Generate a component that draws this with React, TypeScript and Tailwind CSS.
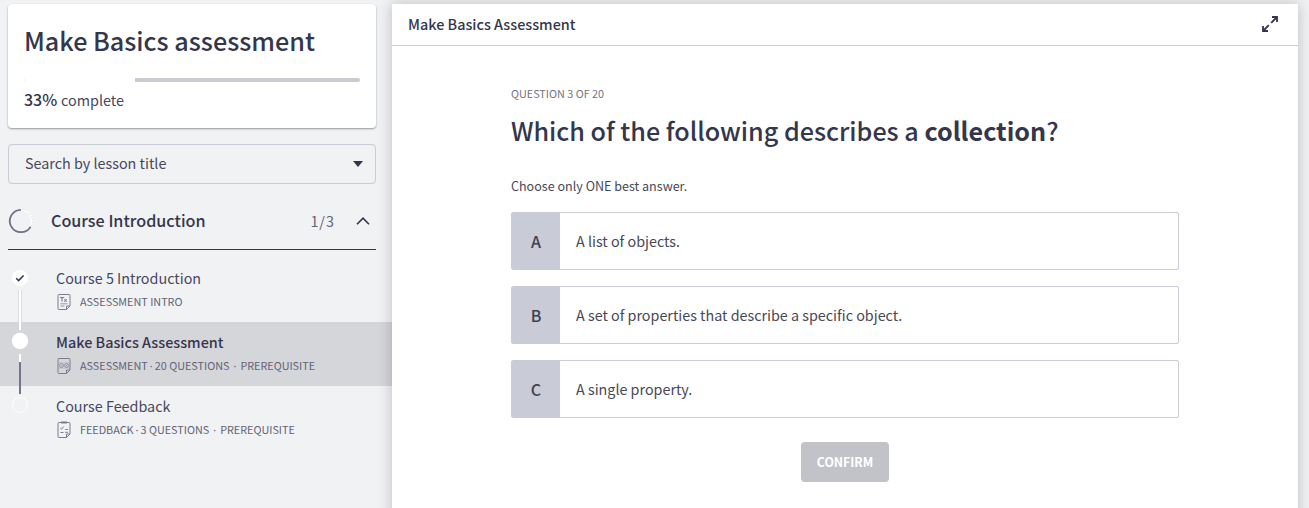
import type { ReactNode } from "react";

function ProgressRing() {
  return (
    <svg width="26" height="26" viewBox="0 0 26 26" fill="none" className="shrink-0">
      <path d="M22.7 18.6A11.2 11.2 0 1 1 13 1.8" stroke="#6f6f86" strokeWidth="1.8" />
      <path d="M13 1.8A11.2 11.2 0 0 1 22.7 18.6" stroke="#ffffff" strokeWidth="2" />
      <path d="M14 1.2A11.9 11.9 0 0 1 23.4 18.2" stroke="#c9cad0" strokeWidth="0.7" strokeDasharray="1.5 1.5" />
    </svg>
  );
}

function Sheet({ children, clip = false }: { children: ReactNode; clip?: boolean }) {
  return (
    <svg width="16" height="18" viewBox="0 0 16 18" fill="none" stroke="#7c7c90" strokeWidth="1" className="mt-px shrink-0">
      <path d="M3 1.5h10a1 1 0 0 1 1 1v10.5l-3.5 3.5H3a1 1 0 0 1-1-1v-13a1 1 0 0 1 1-1z" />
      <path d="M10.5 16.3v-3.3h3.3" />
      {clip && <path d="M5 1.5h6" strokeWidth="2" />}
      {children}
    </svg>
  );
}

function IntroIcon() {
  return (
    <Sheet>
      <path d="M4 4.5h4.2M6 4.5v4M8.3 6.3l2.4 2.4M10.7 6.3L8.3 8.7" strokeWidth="1.1" />
      <path d="M4.5 10.8h7M4.5 13h4" strokeWidth="0.8" />
    </Sheet>
  );
}

function AssessmentIcon() {
  return (
    <Sheet>
      <path d="M2 5.8h12M2 11.2h12" strokeWidth="0.2" />
      <circle cx="5.4" cy="8.5" r="2" strokeWidth="0.8" />
      <circle cx="10.6" cy="8.5" r="2" strokeWidth="0.8" />
      <path d="M4.7 8.5l.7.7 1-1.3M9.9 7.8l1.4 1.4M11.3 7.8L9.9 9.2" strokeWidth="0.5" />
    </Sheet>
  );
}

function FeedbackIcon() {
  return (
    <Sheet clip>
      <path d="M4.3 7l1.2 1.2 2.2-2.7M4.5 11.5h3" strokeWidth="1" />
      <path d="M9 8.5h3M9 11.3h3" strokeWidth="0.9" />
    </Sheet>
  );
}

function Lesson({ title, meta, icon, active = false, prerequisite = false, marker }: {
  title: string; meta: ReactNode; icon: ReactNode; active?: boolean; prerequisite?: boolean; marker: ReactNode;
}) {
  return (
    <li className={active ? "flex h-16 bg-[#d5d6da]" : "flex h-16"}>
      <div className="flex w-14 shrink-0 flex-col pl-2">{marker}</div>
      <div className="min-w-0 flex-1 pt-2">
        <div className={active
          ? "h-[23px] text-[14.4px] leading-6 font-medium text-[#35354d]"
          : "h-[23px] text-[14.35px] leading-6 text-[#47475c]"}>{title}</div>
        <div className="flex h-6 items-center gap-2 text-[10.8px] leading-4 whitespace-pre text-[#626276]">
          {icon}
          <span>
            {meta}
            {prerequisite && <><Dot wide />PREREQUISITE</>}
          </span>
        </div>
      </div>
    </li>
  );
}

function Dot({ wide = false }: { wide?: boolean }) {
  return (
    <span className={wide ? "inline-block w-[11px] text-center font-['Noto_Sans']" : "inline-block w-[7px] text-center font-['Noto_Sans']"}>·</span>
  );
}

function Answer({ letter, text }: { letter: string; text: string }) {
  return (
    <button className="flex h-[58px] w-full overflow-hidden rounded-xs border border-[#c9cbd6] bg-white text-left">
      <span className="flex h-full w-12 shrink-0 items-center justify-center bg-[#c9cbd6] text-[16px] font-medium text-[#3f4050]">{letter}</span>
      <span className="flex h-full items-center pl-4 text-[14.34px] text-[#474855]">{text}</span>
    </button>
  );
}

export default function App() {
  return (
    <div className="flex h-[508px] w-[1309px] overflow-hidden bg-[#f1f2f4] font-['Noto_Sans_CJK_SC',sans-serif] text-[#34364c]">
      <aside className="w-[392px] shrink-0 pt-1">
        <div className="mx-2 h-[124px] w-[368px] rounded-[4px] bg-white px-4 shadow-[0_1px_2px_rgba(0,0,0,0.38)]">
          <h1 className="pt-4 text-[25.15px] leading-10 font-medium">Make Basics assessment</h1>
          <div className="mt-[18px] flex h-1 w-[336px] justify-between">
            <div className="h-1 w-px rounded-l-full bg-[#f4f4f6]" />
            <div className="h-1 w-[225px] rounded-r-full bg-[#c9cbd6]" />
          </div>
          <p className="mt-[5px] flex items-baseline text-[14.4px] leading-6 text-[#47475c]">
            <span className="w-[37px] text-[16px] font-medium text-[#35354d]">33%</span>complete
          </p>
        </div>
        <button className="mx-2 mt-4 flex h-10 w-[368px] items-center justify-between rounded-[4px] border border-[#c9cbd6] pr-3 pl-4 text-[14.35px] text-[#47475c]">
          <span className="pb-0.5">Search by lesson title</span>
          <svg width="10" height="6" viewBox="0 0 10 6"><path d="M0 0h10L5 6z" fill="#34344c" /></svg>
        </button>
        <div className="mx-2 mt-2 flex h-[58px] w-[368px] items-center border-b border-[#34344c]">
          <ProgressRing />
          <h2 className="ml-[17px] flex-1 pb-0.5 text-[16.15px] leading-6 font-medium">Course Introduction</h2>
          <span className="text-[14.4px] leading-6 tracking-[1px] text-[#626276]">1/3</span>
          <svg width="14" height="8" viewBox="0 0 14 8" fill="none" className="mr-[6px] ml-[21px]">
            <path d="M1 7.2L7 1.2l6 6" stroke="#34344c" strokeWidth="1.6" />
          </svg>
        </div>
        <ul className="mt-2">
          <Lesson
            title="Course 5 Introduction"
            meta="ASSESSMENT INTRO"
            icon={<IntroIcon />}
            marker={
              <svg width="24" height="64" viewBox="0 0 24 64" fill="none">
                <circle cx="12" cy="20" r="8" fill="#fff" />
                <path d="M8.2 20.2l2.4 2.4 5-5.2" stroke="#34344c" strokeWidth="1.5" />
                <path d="M10.7 32v32M13.3 32v32" stroke="#d5d6da" strokeWidth="0.9" />
                <path d="M12 32v32" stroke="#fff" strokeWidth="1.8" />
              </svg>
            }
          />
          <Lesson
            active
            prerequisite
            title="Make Basics Assessment"
            meta={<>ASSESSMENT<Dot />20 QUESTIONS</>}
            icon={<AssessmentIcon />}
            marker={
              <svg width="24" height="64" viewBox="0 0 24 64" fill="none">
                <path d="M12 0v8" stroke="#fff" strokeWidth="2" />
                <circle cx="12" cy="19" r="8.2" fill="#fff" />
                <path d="M12 32v8" stroke="#fff" strokeWidth="2" />
                <path d="M12 40v24" stroke="#74748a" strokeWidth="2" />
              </svg>
            }
          />
          <Lesson
            prerequisite
            title="Course Feedback"
            meta={<>FEEDBACK<Dot />3 QUESTIONS</>}
            icon={<FeedbackIcon />}
            marker={
              <svg width="24" height="64" viewBox="0 0 24 64" fill="none">
                <path d="M12 0v8" stroke="#74748a" strokeWidth="2" />
                <circle cx="12" cy="19" r="7.6" stroke="#fbfbfc" strokeWidth="1.2" />
              </svg>
            }
          />
        </ul>
      </aside>
      <main className="mt-1 h-[540px] w-[906px] shrink-0 bg-white shadow-[0_0_14px_rgba(0,0,0,0.22)]">
        <header className="flex h-[42px] items-center justify-between border-b border-[#c9cbd6] pr-5 pb-0.5 pl-4">
          <h2 className="text-[14.4px] leading-6 font-medium">Make Basics Assessment</h2>
          <svg width="16" height="16" viewBox="0 0 16 16" fill="none" stroke="#34344c" strokeWidth="1.8">
            <path d="M10 1h5v5M15 1L9.2 6.8M6 15H1v-5M1 15l5.8-5.8" />
          </svg>
        </header>
        <section className="ml-[119px] flex w-[668px] flex-col">
          <p className="mt-[39px] text-[10.8px] leading-4 text-[#74747f]">QUESTION 3 OF 20</p>
          <h1 className="mt-[9px] text-[25.15px] leading-10 font-medium whitespace-nowrap">
            Which of the following describes a <strong className="font-bold">collection</strong>?
          </h1>
          <p className="mt-[26px] text-[12.55px] leading-5 text-[#474855]">Choose only ONE best answer.</p>
          <div className="mt-4 flex flex-col gap-4">
            <Answer letter="A" text="A list of objects." />
            <Answer letter="B" text="A set of properties that describe a specific object." />
            <Answer letter="C" text="A single property." />
          </div>
          <button className="mt-6 h-10 w-[88px] self-center rounded-[4px] bg-[#c2c3c9] text-[12.3px] font-bold text-white">CONFIRM</button>
        </section>
      </main>
    </div>
  );
}
